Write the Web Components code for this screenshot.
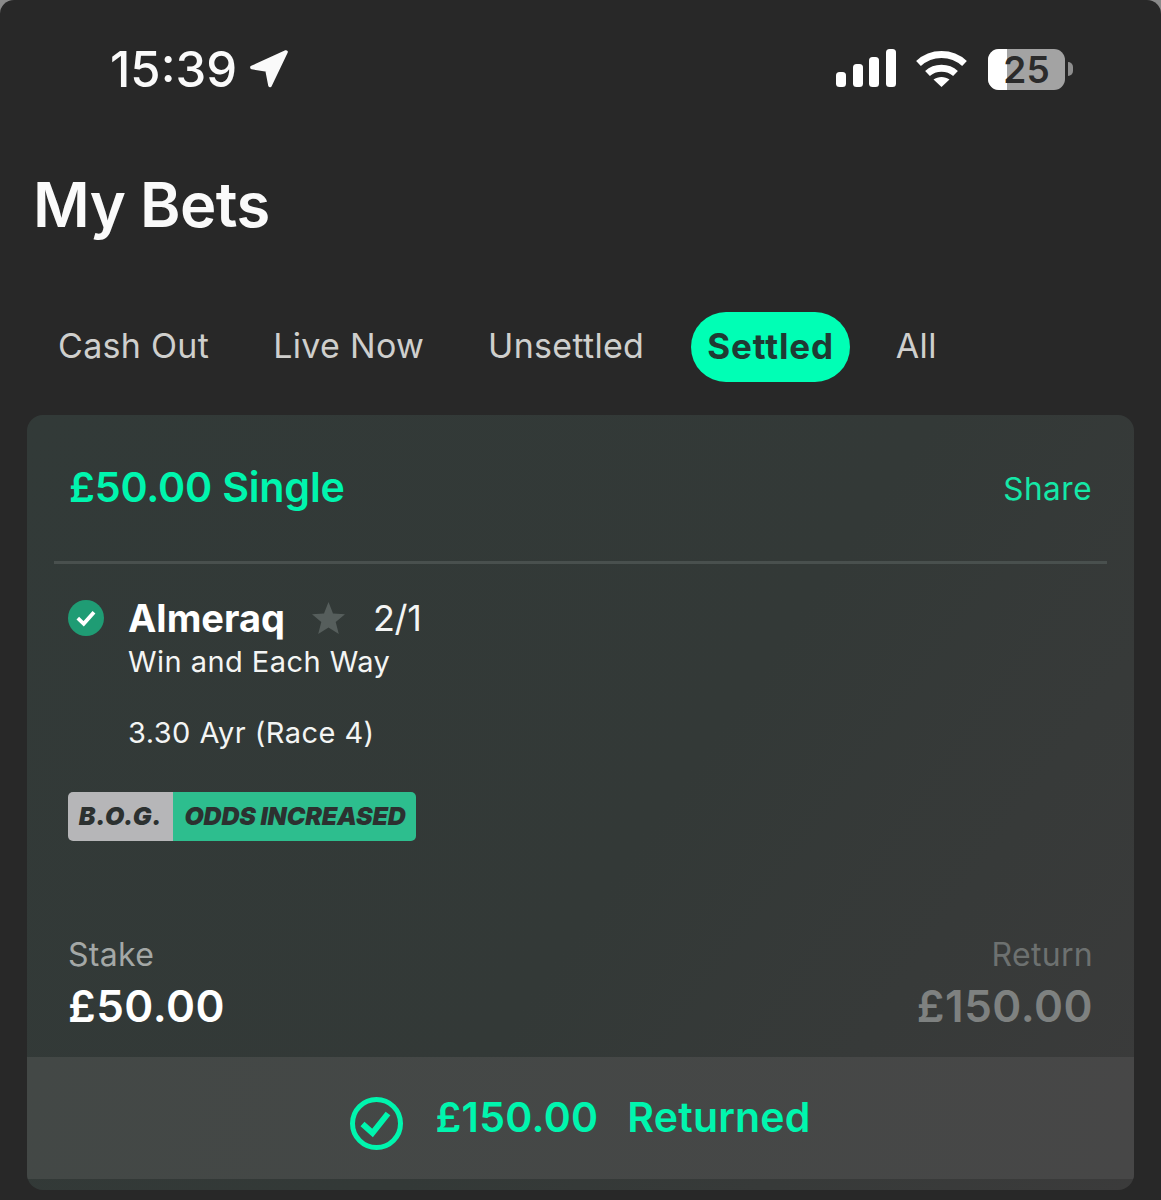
<!DOCTYPE html>
<html lang="en">
<head>
<meta charset="utf-8">
<title>My Bets</title>
<style>
  html { background: #8a8a8a; }
  body {
    margin: 0;
    height: 1200px;
    overflow: hidden;
    background: #282828;
    border-radius: 14px 14px 0 0;
    font-family: Inter, "Liberation Sans", sans-serif;
    color: #fff;
  }
</style>
</head>
<body>
<status-bar time="15:39" battery="25"></status-bar>
<page-title>My Bets</page-title>
<bet-tabs active="Settled" items="Cash Out|Live Now|Unsettled|Settled|All"></bet-tabs>
<bet-card>
  <span slot="title">£50.00 Single</span>
  <bet-leg name="Almeraq" odds="2/1" market="Win and Each Way" event="3.30 Ayr (Race 4)"></bet-leg>
  <bog-badge slot="badge"></bog-badge>
  <bet-amount slot="stake" label="Stake" value="£50.00"></bet-amount>
  <bet-amount slot="return" label="Return" value="£150.00" muted></bet-amount>
  <bet-result slot="result" amount="£150.00"></bet-result>
</bet-card>

<script>
class StatusBar extends HTMLElement {
    connectedCallback() {
        const time = this.getAttribute('time');
        const battery = this.getAttribute('battery');
        this.attachShadow({ mode: 'open' }).innerHTML = `
      <style>
        :host { display: flex; align-items: center; height: 138px; padding: 0 88px 0 110px; box-sizing: border-box; }
        .time { font-size: 49px; font-weight: 500; line-height: 1; color: #fafafa; }
        .arrow { margin-left: 12px; display: block; }
        .right { margin-left: auto; display: flex; align-items: center; }
        .wifi { margin: 0 20px 0 20px; display: block; }
        .battery { position: relative; width: 77px; height: 41px; border-radius: 11px; background: #a3a3a3; }
        .fill { width: 19px; height: 100%; background: #fff; border-radius: 11px 0 0 11px; }
        .level { position: absolute; inset: 0; text-align: center; font-size: 37px; font-weight: 600; line-height: 41px; color: #2b2b2b; }
        .cap { width: 5px; height: 14px; margin-left: 3px; background: #8e8e8e; border-radius: 0 5px 5px 0; }
      </style>
      <span class="time">${time}</span>
      <svg class="arrow" width="40" height="38" viewBox="0 0 40 38">
        <path d="M37 2 3 17.5 18 20 21 35.5Z" fill="#fafafa" stroke="#fafafa" stroke-width="3.6" stroke-linejoin="round"/>
      </svg>
      <div class="right">
        <svg width="60" height="40" viewBox="0 0 60 40" style="display:block">
          <rect x="0" y="23" width="10" height="15" rx="3.5" fill="#fff"/>
          <rect x="17" y="15" width="10" height="23" rx="3.5" fill="#fff"/>
          <rect x="33" y="8" width="10" height="30" rx="3.5" fill="#fff"/>
          <rect x="50" y="0" width="10" height="38" rx="3.5" fill="#fff"/>
        </svg>
        <svg class="wifi" width="52" height="38" viewBox="0 0 52 38">
          <path d="M2.5 13.5C15.5 1.5 35.5 1.5 48.5 13.5" fill="none" stroke="#fff" stroke-width="7"/>
          <path d="M11.5 23.5C19 16.5 32 16.5 39.5 23.5" fill="none" stroke="#fff" stroke-width="7"/>
          <path d="M25.5 37 17.5 29.5C22 26 29 26 33.5 29.5Z" fill="#fff"/>
        </svg>
        <div class="battery"><div class="fill"></div><div class="level">${battery}</div></div>
        <div class="cap"></div>
      </div>
    `;
    }
}

class PageTitle extends HTMLElement {
    constructor() {
        super();
        this.attachShadow({ mode: 'open' }).innerHTML = `
      <style>
        :host { display: block; padding-left: 33px; height: 174px; font-size: 61.5px; font-weight: 600; line-height: 134px; letter-spacing: -0.6px; color: #fafafa; }
      </style>
      <slot></slot>
    `;
    }
}

class BetTabs extends HTMLElement {
    connectedCallback() {
        const active = this.getAttribute('active');
        const items = this.getAttribute('items').split('|');
        this.attachShadow({ mode: 'open' }).innerHTML = `
      <style>
        :host { display: flex; align-items: center; height: 70px; padding-left: 41px; margin-bottom: 33px; }
        span { display: block; padding: 0 17px; margin-right: 30px; height: 70px; line-height: 68px; font-size: 34px; letter-spacing: 0.3px; color: #cfcfcd; border-radius: 35px; white-space: nowrap; }
        span.on { padding: 0 16px; margin-right: 29px; background: #00ffb5; color: #1f3a33; font-size: 35px; font-weight: 700; letter-spacing: 0.85px; }
      </style>
      ${items.map(t => `<span class="${t === active ? 'on' : ''}">${t}</span>`).join('')}
    `;
    }
}

class BetCard extends HTMLElement {
    constructor() {
        super();
        this.attachShadow({ mode: 'open' }).innerHTML = `
      <style>
        :host { display: flex; flex-direction: column; margin: 0 27px; height: 775px; border-radius: 16px; overflow: hidden; background: linear-gradient(125deg, #323a38 0%, #333937 55%, #3b3b3b 100%); }
        .head { display: flex; align-items: center; justify-content: space-between; height: 149px; margin: 0 27px; padding: 0 15px 0 15px; border-bottom: 3px solid #49504e; box-sizing: border-box; flex: none; }
        .title { font-size: 41.2px; font-weight: 600; color: #00f5ae; letter-spacing: -0.2px; position: relative; top: -1px; }
        .share { font-size: 31.5px; color: #14e8a8; letter-spacing: 0.5px; }
        .legs { padding: 33px 41px 0; flex: none; }
        .badge { padding: 37px 41px 0; flex: none; }
        .totals { display: flex; justify-content: space-between; padding: 94px 41px 0; box-sizing: border-box; height: 216px; flex: none; }
        .result { flex: none; }
      </style>
      <div class="head">
        <div class="title"><slot name="title"></slot></div>
        <div class="share">Share</div>
      </div>
      <div class="legs"><slot></slot></div>
      <div class="badge"><slot name="badge"></slot></div>
      <div class="totals"><slot name="stake"></slot><slot name="return"></slot></div>
      <div class="result"><slot name="result"></slot></div>
    `;
    }
}

class BetLeg extends HTMLElement {
    connectedCallback() {
        const a = n => this.getAttribute(n);
        this.attachShadow({ mode: 'open' }).innerHTML = `
      <style>
        :host { display: grid; grid-template-columns: 60px 1fr; color: #f4f5f4; }
        svg { display: block; }
        .check { margin-top: 3px; }
        .line { display: flex; align-items: center; height: 42px; }
        .name { font-size: 38px; font-weight: 700; color: #fff; }
        .star { margin: 0 28px 0 27px; }
        .odds { font-size: 36px; letter-spacing: -0.3px; }
        .sub { font-size: 29px; line-height: 44px; letter-spacing: 0.45px; margin-top: 1px; }
        .event { margin-top: 27px; }
      </style>
      <svg class="check" width="36" height="36" viewBox="0 0 36 36">
        <circle cx="18" cy="18" r="18" fill="#1f9c74"/>
        <path d="M9.8 18.2 15.7 23.8 26 12.2" fill="none" stroke="#fff" stroke-width="3.8"/>
      </svg>
      <div>
        <div class="line">
          <span class="name">${a('name')}</span>
          <svg class="star" width="33" height="32" viewBox="0 0 33 32"><path d="M16.5 0 21 11.5 33 12.3 23.7 20 26.8 32 16.5 25.4 6.2 32 9.3 20 0 12.3 12 11.5Z" fill="#565e5c"/></svg>
          <span class="odds">${a('odds')}</span>
        </div>
        <div class="sub">${a('market')}</div>
        <div class="sub event">${a('event')}</div>
      </div>
    `;
    }
}

class BogBadge extends HTMLElement {
    constructor() {
        super();
        this.attachShadow({ mode: 'open' }).innerHTML = `
      <style>
        :host { display: inline-flex; height: 49px; border-radius: 5px; overflow: hidden; font-size: 25px; font-weight: 900; font-style: italic; line-height: 48px; color: #2c3130; white-space: nowrap; }
        .a { width: 105px; background: #b6b6b8; text-align: center; letter-spacing: 0.6px; }
        .b { width: 243px; background: #2dbe8e; text-align: center; letter-spacing: -0.2px; padding-left: 1px; box-sizing: border-box; }
      </style>
      <div class="a">B.O.G.</div><div class="b">ODDS INCREASED</div>
    `;
    }
}

class BetAmount extends HTMLElement {
    connectedCallback() {
        const muted = this.hasAttribute('muted');
        this.attachShadow({ mode: 'open' }).innerHTML = `
      <style>
        :host { display: block; text-align: ${muted ? 'right' : 'left'}; }
        .label { font-size: 32px; line-height: 40px; letter-spacing: 0.3px; color: ${muted ? '#6d7170' : '#a4a8a6'}; }
        .value { font-size: 44px; font-weight: 600; line-height: 62px; letter-spacing: 0.5px; color: ${muted ? '#7e8180' : '#fff'}; }
      </style>
      <div class="label">${this.getAttribute('label')}</div>
      <div class="value">${this.getAttribute('value')}</div>
    `;
    }
}

class BetResult extends HTMLElement {
    connectedCallback() {
        this.attachShadow({ mode: 'open' }).innerHTML = `
      <style>
        :host { display: flex; align-items: center; justify-content: center; height: 122px; background: linear-gradient(100deg, #434846, #474747); font-size: 41px; font-weight: 600; color: #00f5ae; box-sizing: border-box; }
        svg { display: block; margin: 10px 32px 0 0; }
        .amt { margin-right: 29px; letter-spacing: 0.3px; position: relative; top: -1px; }
        .txt { position: relative; top: -1px; letter-spacing: 0.2px; }
      </style>
      <svg width="53" height="53" viewBox="0 0 53 53" fill="none" stroke="#00f5ae">
        <circle cx="26.5" cy="26.5" r="24" stroke-width="5"/>
        <path d="M12.5 27 22.5 36 38 16.5" stroke-width="6"/>
      </svg>
      <span class="amt">${this.getAttribute('amount')}</span><span class="txt">Returned</span>
    `;
    }
}

customElements.define('status-bar', StatusBar);
customElements.define('page-title', PageTitle);
customElements.define('bet-tabs', BetTabs);
customElements.define('bet-card', BetCard);
customElements.define('bet-leg', BetLeg);
customElements.define('bog-badge', BogBadge);
customElements.define('bet-amount', BetAmount);
customElements.define('bet-result', BetResult);
</script>
</body>
</html>
